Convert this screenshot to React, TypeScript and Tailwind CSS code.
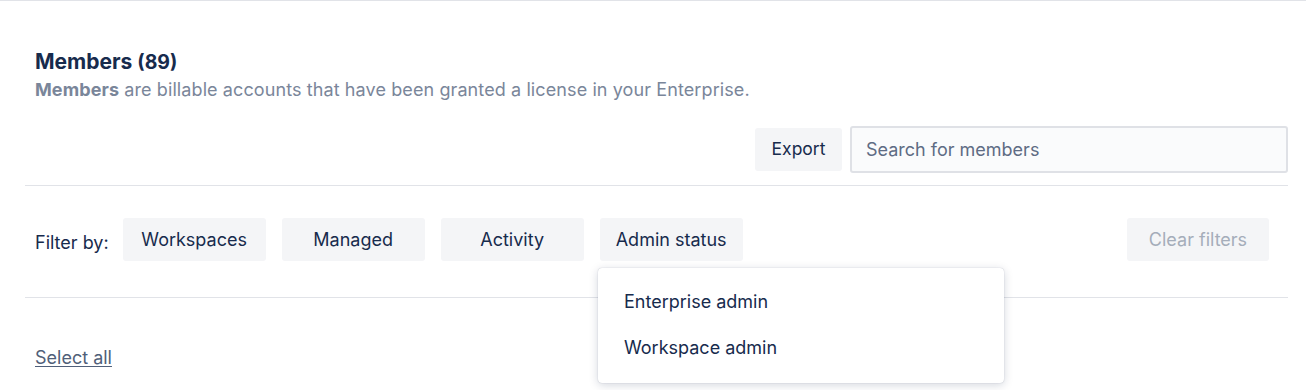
import React from "react";

const filters = ["Workspaces", "Managed", "Activity", "Admin status"];

export default function App() {
  return (
    <div className="w-[1306px] h-[390px] overflow-hidden bg-white border-t border-[#e1e3e8] text-[#172b4d]" style={{ fontFamily: "Inter, 'Noto Sans', sans-serif" }}>
      <div className="ml-[25px] w-[1263px]">
        {/* Header */}
        <div className="px-[10px] pt-[48px]">
          <h2 className="text-[21px] leading-[26px] font-bold tracking-[0px]">
            Members <span className="text-[19.5px]">(89)</span>
          </h2>
          <p className="mt-[3px] text-[18px] leading-[24px] text-[#7a869a] tracking-[0.1px]">
            <span className="font-bold">Members</span> are billable accounts that have been granted a license in your Enterprise.
          </p>
        </div>

        {/* Actions */}
        <div className="flex items-center justify-end gap-[8px] mt-[24px]">
          <button className="h-[43px] w-[87px] rounded-[3px] bg-[#f4f5f7] text-[17.5px] text-[#172b4d]">Export</button>
          <input
            placeholder="Search for members"
            className="h-[47px] w-[438px] rounded-[3px] border-2 border-[#dfe1e6] bg-[#fafbfc] px-[14px] text-[18px] placeholder:text-[#5e6c84] outline-none"
          />
        </div>

        <div className="mt-[12px] border-t border-[#e1e3e8]" />

        {/* Filters */}
        <div className="relative flex items-center px-[10px] pt-[32px] pb-[36px] pr-[19px]">
          <span className="text-[18px] mr-[14px] mt-[6px]">Filter by:</span>
          <div className="flex gap-[16px]">
            {filters.map((f) => (
              <button key={f} className="h-[43px] w-[143px] rounded-[3px] bg-[#f4f5f7] text-[18px] text-[#172b4d]">
                {f}
              </button>
            ))}
          </div>
          <button className="ml-auto h-[43px] w-[142px] rounded-[3px] bg-[#f4f5f7] text-[18px] text-[#a5adba]">Clear filters</button>

          {/* Dropdown */}
          <div className="absolute left-[573px] top-[82px] z-10 w-[406px] rounded-[4px] bg-white pt-[10px] pb-[13px] shadow-[0_2px_10px_rgba(9,30,66,0.18),0_0_1px_rgba(9,30,66,0.31)]">
            <div className="h-[46px] flex items-center px-[26px] text-[18px]">Enterprise admin</div>
            <div className="h-[46px] flex items-center px-[26px] text-[18px]">Workspace admin</div>
          </div>
        </div>

        <div className="border-t border-[#e1e3e8]" />

        <div className="px-[10px] pt-[46px]">
          <a href="#" className="text-[18px] text-[#505f79] underline underline-offset-2">Select all</a>
        </div>
      </div>
    </div>
  );
}
